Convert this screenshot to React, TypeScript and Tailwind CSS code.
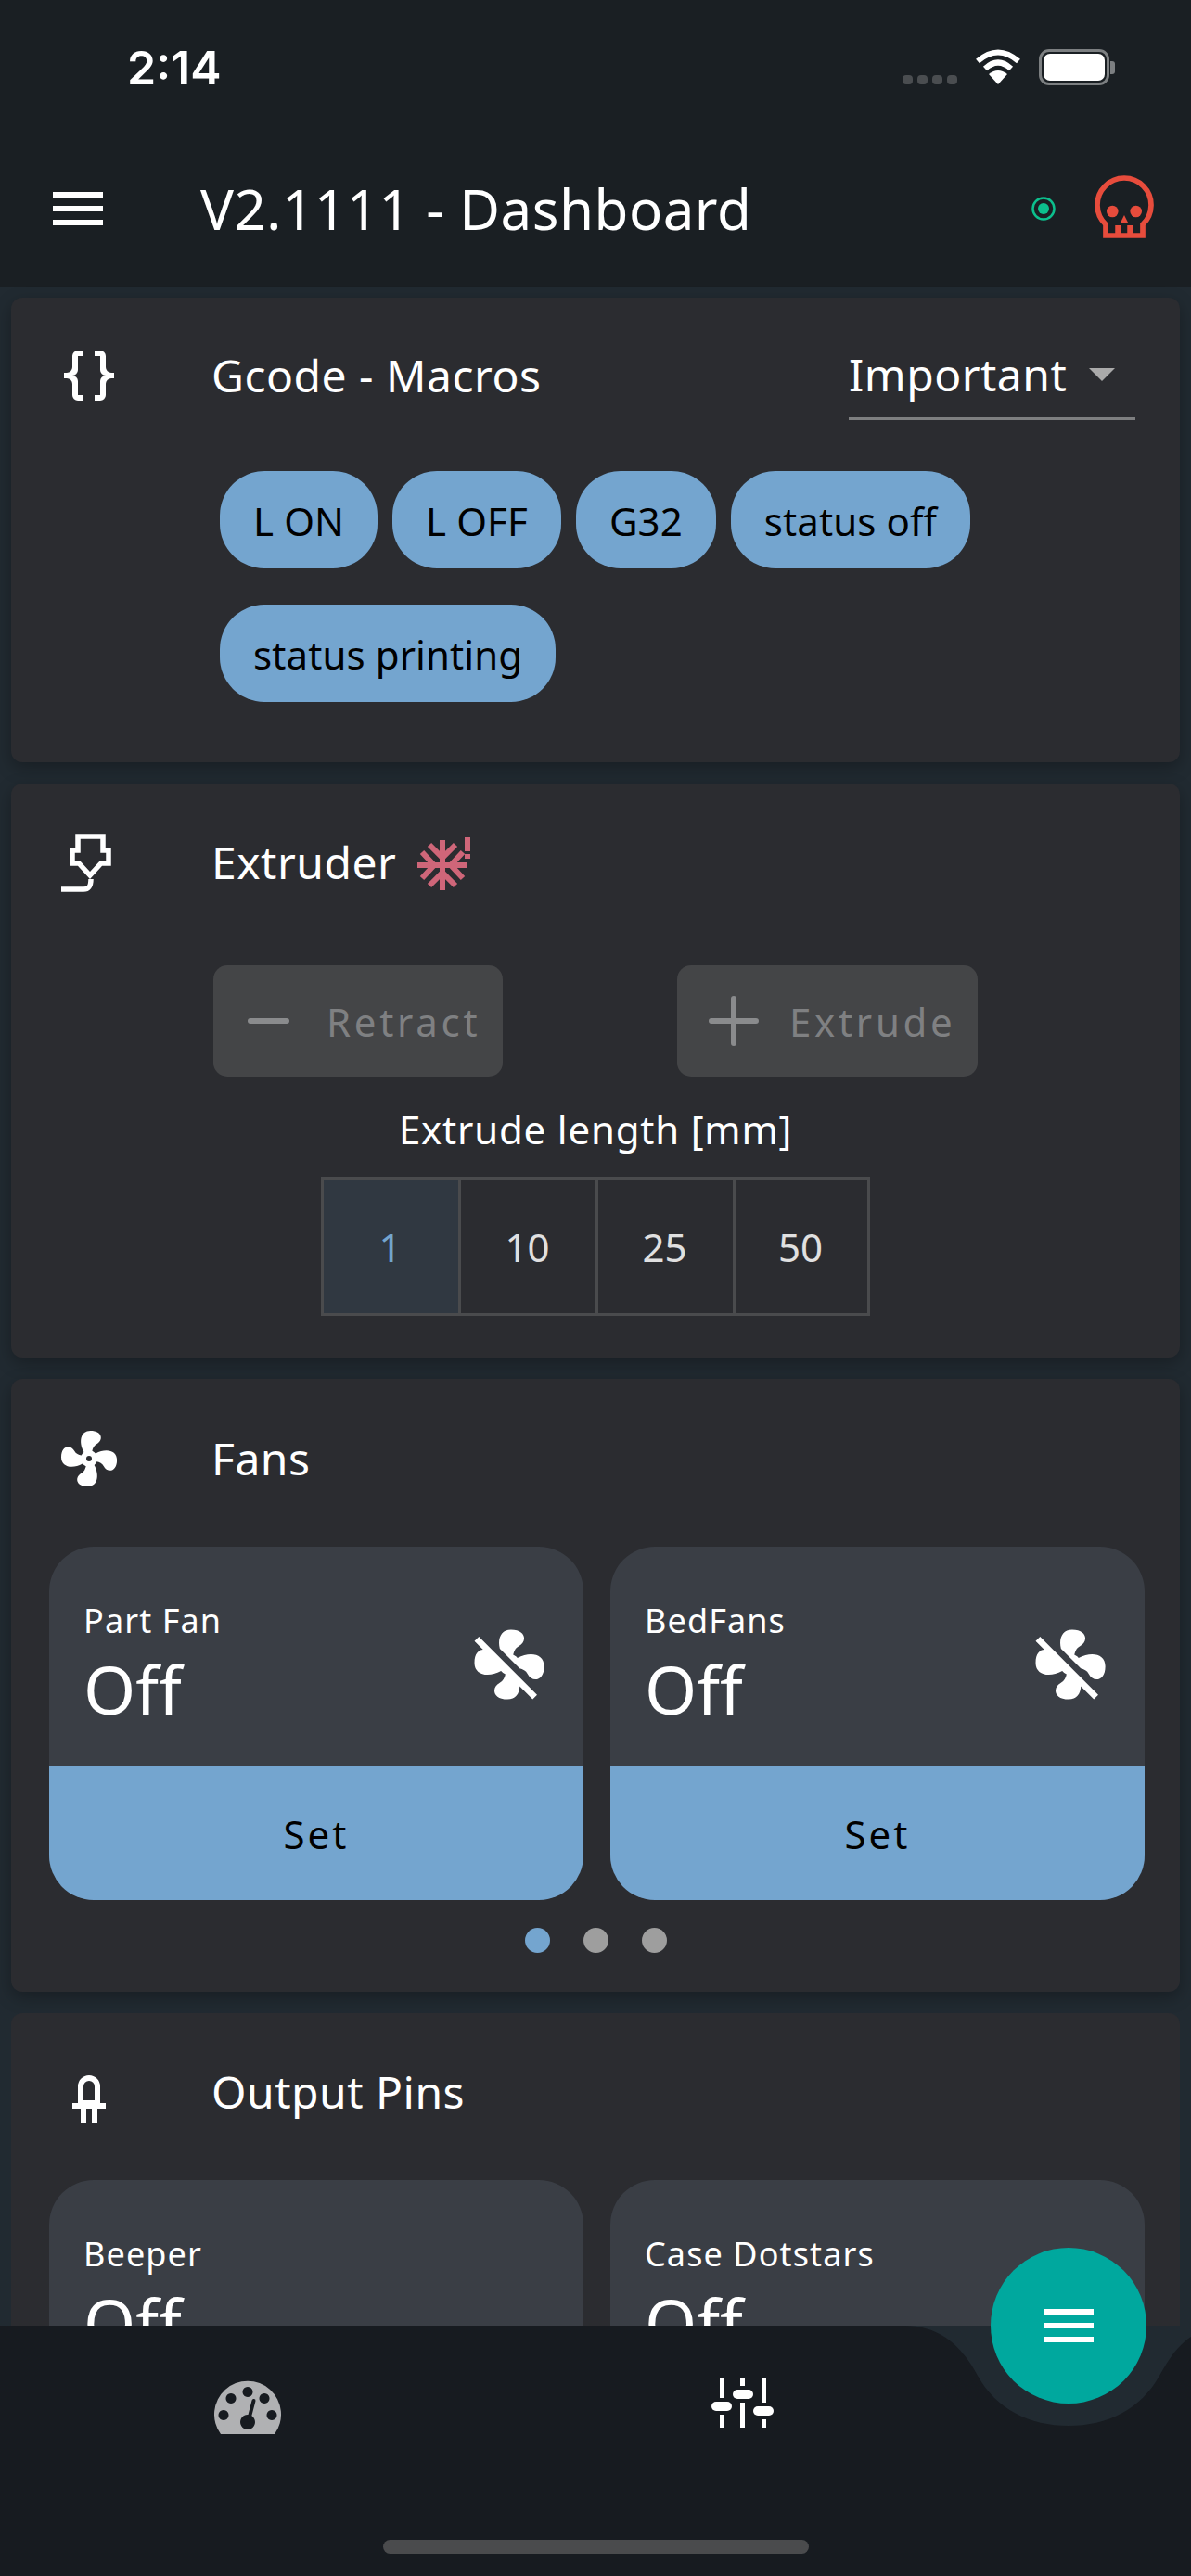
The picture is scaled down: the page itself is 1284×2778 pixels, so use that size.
import React from "react";

const MENU = "M3,6H21V8H3V6M3,11H21V13H3V11M3,16H21V18H3V16Z";
const BRACES =
  "M8,3A2,2 0 0,0 6,5V9A2,2 0 0,1 4,11H3V13H4A2,2 0 0,1 6,15V19A2,2 0 0,0 8,21H10V19H8V14A2,2 0 0,0 6,12A2,2 0 0,0 8,10V5H10V3M16,3A2,2 0 0,1 18,5V9A2,2 0 0,0 20,11H21V13H20A2,2 0 0,0 18,15V19A2,2 0 0,1 16,21H14V19H16V14A2,2 0 0,1 18,12A2,2 0 0,1 16,10V5H14V3H16Z";
const FAN =
  "M12,11A1,1 0 0,0 11,12A1,1 0 0,0 12,13A1,1 0 0,0 13,12A1,1 0 0,0 12,11M12.5,2C17,2 17.11,5.57 14.75,6.75C13.76,7.24 13.32,8.29 13.13,9.22C13.61,9.42 14.03,9.73 14.35,10.13C18.05,8.13 22.03,8.92 22.03,12.5C22.03,17 18.46,17.1 17.28,14.73C16.78,13.74 15.72,13.3 14.79,13.11C14.59,13.59 14.28,14 13.88,14.34C15.87,18.03 15.08,22 11.5,22C7,22 6.91,18.42 9.27,17.24C10.25,16.75 10.69,15.71 10.89,14.79C10.4,14.59 9.97,14.27 9.65,13.87C5.96,15.85 2,15.07 2,11.5C2,7 5.56,6.89 6.74,9.26C7.24,10.25 8.29,10.68 9.22,10.87C9.41,10.39 9.73,9.97 10.14,9.65C8.15,5.96 8.94,2 12.5,2Z";
const FAN_OFF =
  "M12.5 2C9.64 2 8.57 4.55 9.29 7.47L15 13.16C15.87 13.37 16.81 13.81 17.28 14.73C18.46 17.1 22.03 17 22.03 12.5C22.03 8.92 18.05 8.13 14.35 10.13C14.03 9.73 13.61 9.42 13.13 9.22C13.32 8.29 13.76 7.24 14.75 6.75C17.11 5.57 17 2 12.5 2M3.28 4L2 5.27L4.47 7.73C3.22 7.74 2 8.87 2 11.5C2 15.07 5.96 15.85 9.65 13.87C9.97 14.27 10.4 14.59 10.89 14.79C10.69 15.71 10.25 16.75 9.27 17.24C6.91 18.42 7 22 11.5 22C13.8 22 14.94 20.36 15 18.26L18.73 22L20 20.72L3.28 4Z";
const LED =
  "M12,6A4,4 0 0,0 8,10V16H6V18H9V23H11V18H13V23H15V18H18V16H16V10A4,4 0 0,0 12,6M12,8A2,2 0 0,1 14,10V15H10V10A2,2 0 0,1 12,8Z";

const Mdi = ({ d, className }: { d: string; className?: string }) => (
  <svg viewBox="0 0 24 24" fill="currentColor" className={className}>
    <path d={d} />
  </svg>
);

const ExtruderIcon = () => (
  <svg viewBox="0 -2 72 72" className="w-[72px] h-[72px] overflow-visible" fill="none" stroke="white" strokeWidth="5.5">
    <path d="M24 6 H51 V21 H57 V35 H49 L37 48 L25 35 H18 V21 H24 Z" />
    <path d="M38 52 C38 60 36 63 30 63 H6" />
  </svg>
);

const SnowAlert = () => (
  <svg viewBox="0 0 60 64" className="w-[60px] h-[64px] ml-[23px] -mt-[2px]" fill="none" stroke="#cf6679" strokeWidth="6">
    <path d="M0 36 H54 M27 9 V63" />
    <path d="M13 14 L27 28 L41 14 M13 58 L27 44 L41 58" />
    <path d="M5 22 L18 36 L5 50 M49 22 L36 36 L49 50" />
    <path d="M54 6 V21 M54 24 V29" />
  </svg>
);

const SkullIcon = () => (
  <svg viewBox="0 -1 66 70" className="w-[66px] h-[70px]" fill="none">
    <path d="M13 64 V52 A29 29 0 1 1 53 52 V64 Z" stroke="#e74c3c" strokeWidth="5.7" />
    <circle cx="20.3" cy="38" r="6.3" fill="#e74c3c" />
    <circle cx="45.7" cy="38" r="6.3" fill="#e74c3c" />
    <path d="M33 42 L37 50 H29 Z" fill="#e74c3c" />
    <path d="M26.5 53 V64 M39.5 53 V64" stroke="#e74c3c" strokeWidth="6.5" />
  </svg>
);

const GaugeIcon = () => (
  <svg viewBox="0 0 72 58" className="w-[72px] h-[58px]">
    <path
      fillRule="evenodd"
      fill="#b0b1b3"
      d="M7 58 A36 36 0 1 1 65 58 Z M36 7 a5.5 5.5 0 1 0 .01 0 Z M18 14 a5.5 5.5 0 1 0 .01 0 Z M54 14 a5.5 5.5 0 1 0 .01 0 Z M10 32 a5.5 5.5 0 1 0 .01 0 Z M62 32 a5.5 5.5 0 1 0 .01 0 Z M36 37 a8 8 0 1 0 .01 0 Z"
    />
    <path d="M37 43 L42.5 22" stroke="#171b20" strokeWidth="4" strokeLinecap="round" />
  </svg>
);

const TuneIcon = () => (
  <svg viewBox="0 0 68 54" className="w-[68px] h-[54px]" fill="white">
    <rect x="9" y="0" width="5" height="22" />
    <rect x="9" y="40" width="5" height="14" />
    <rect x="31" y="0" width="5" height="9" />
    <rect x="31" y="27" width="5" height="27" />
    <rect x="54" y="0" width="5" height="27" />
    <rect x="54" y="45" width="5" height="9" />
    <rect x="0" y="26" width="22" height="10" rx="5" />
    <rect x="23" y="13" width="22" height="10" rx="5" />
    <rect x="45" y="31" width="22" height="10" rx="5" />
  </svg>
);

const CardHeader = ({ icon, title, extra }: { icon: React.ReactNode; title: string; extra?: React.ReactNode }) => (
  <div className="flex items-center h-[72px] pl-[48px]">
    <div className="w-[72px] h-[72px] shrink-0 text-white">{icon}</div>
    <span className="ml-[96px] text-[48px] leading-[72px] tracking-[0.5px] text-white">{title}</span>
    {extra}
  </div>
);

const macros = ["L ON", "L OFF", "G32", "status off", "status printing"];

const MacroChip = ({ label }: { label: string }) => (
  <button className="h-[105px] px-[36px] pt-[2px] rounded-[48px] bg-[#74a5cf] text-black text-[42px] tracking-[0.1px]">
    {label}
  </button>
);

const StatTile = ({ name, withIcon, withSet }: { name: string; withIcon?: boolean; withSet?: boolean }) => (
  <div className="w-[576px] shrink-0 rounded-[48px] overflow-hidden bg-[#3a3e45]">
    <div className="flex justify-between h-[237px]">
      <div className="pl-[37px] pt-[56px]">
        <div className="text-[36px] leading-[48px] tracking-[1.1px] text-white">{name}</div>
        <div className="mt-[13px] text-[72px] leading-[72px] text-white">Off</div>
      </div>
      {withIcon && <Mdi d={FAN_OFF} className="w-[90px] h-[90px] mt-[82px] mr-[35px] text-white" />}
    </div>
    {withSet && (
      <div className="h-[144px] flex items-center justify-center bg-[#74a5cf] text-black text-[42px] tracking-[3px]">
        Set
      </div>
    )}
  </div>
);

const App = () => {
  return (
    <div className="relative h-[2778px] overflow-hidden bg-[#212a31] font-['Noto_Sans',sans-serif]">
      {/* Status bar + app bar */}
      <div className="h-[309px] bg-[#1a1f23] flex flex-col">
        <div className="h-[144px] flex items-start justify-between pl-[137px] pr-[82px] pt-[43px]">
          <span className="font-['Inter',sans-serif] font-semibold text-[50px] leading-[60px] text-white">2:14</span>
          <div className="flex items-start mt-[10px]">
            <div className="flex gap-[5px] mt-[28px]">
              <span className="w-[11px] h-[10px] rounded-[4px] bg-[#4a4d50]" />
              <span className="w-[11px] h-[10px] rounded-[4px] bg-[#4a4d50]" />
              <span className="w-[11px] h-[10px] rounded-[4px] bg-[#4a4d50]" />
              <span className="w-[11px] h-[10px] rounded-[4px] bg-[#4a4d50]" />
            </div>
            <svg viewBox="0 0 50 38" className="w-[50px] h-[38px] ml-[19px]" fill="none" stroke="white" strokeWidth="6">
              <path d="M3 13 Q25 -6 47 13" />
              <path d="M11 21 Q25 8 39 21" />
              <path d="M25 38 L15 27 Q25 19 35 27 Z" fill="white" stroke="none" />
            </svg>
            <div className="ml-[19px] flex items-center">
              <div className="w-[76px] h-[39px] rounded-[11px] border-[3px] border-[#7c7f81] p-[2px]">
                <div className="w-full h-full rounded-[7px] bg-white" />
              </div>
              <div className="w-[5px] h-[14px] ml-[1px] rounded-r-[3px] bg-[#7c7f81]" />
            </div>
          </div>
        </div>
        <div className="flex items-center h-[72px] mt-[45px] pl-[48px] pr-[39px]">
          <Mdi d={MENU} className="w-[72px] h-[72px] text-white" />
          <span className="ml-[96px] text-[60px] leading-[72px] tracking-[0.5px] text-white">V2.1111 - Dashboard</span>
          <svg viewBox="0 0 26 26" className="ml-auto w-[26px] h-[26px]" fill="none">
            <circle cx="13" cy="13" r="11.5" stroke="#0cbf8d" strokeWidth="2.5" />
            <circle cx="13" cy="13" r="6" fill="#0cbf8d" />
          </svg>
          <div className="ml-[41px] -mt-[3px]">
            <SkullIcon />
          </div>
        </div>
      </div>

      {/* Panels */}
      <main className="flex flex-col gap-[23px] px-[12px] pt-[12px]">
        <section className="rounded-[12px] bg-[#2b2c30] shadow-[0_6px_18px_rgba(0,0,0,0.28)] pt-[48px] pb-[65px]">
          <CardHeader
            icon={<Mdi d={BRACES} className="w-[72px] h-[72px]" />}
            title="Gcode - Macros"
            extra={
              <div className="ml-auto mr-[48px] w-[309px] h-[96px] shrink-0 flex items-center justify-between pr-[22px] border-b-[3px] border-[#7e7f80]">
                <span className="text-[48px] tracking-[0.5px] text-white">Important</span>
                <span className="w-0 h-0 border-x-[14px] border-x-transparent border-t-[14px] border-t-[#aaaaaa]" />
              </div>
            }
          />
          <div className="flex flex-wrap gap-x-[16px] gap-y-[39px] mt-[67px] pl-[225px] pr-[100px]">
            {macros.map((m) => (
              <MacroChip key={m} label={m} />
            ))}
          </div>
        </section>

        <section className="rounded-[12px] bg-[#2b2c30] shadow-[0_6px_18px_rgba(0,0,0,0.28)] pt-[49px] pb-[45px]">
          <CardHeader icon={<ExtruderIcon />} title="Extruder" extra={<SnowAlert />} />
          <div className="flex mt-[75px] pl-[218px] gap-[188px]">
            <button className="w-[312px] h-[120px] rounded-[15px] bg-[#444547] flex items-center pl-[37px] text-[#7f8082]">
              <span className="w-[45px] h-[6px] rounded-full bg-[#8a8b8d]" />
              <span className="ml-[40px] text-[42px] tracking-[3.7px]">Retract</span>
            </button>
            <button className="w-[324px] h-[120px] rounded-[15px] bg-[#444547] flex items-center pl-[34px] text-[#7f8082]">
              <svg viewBox="0 0 54 54" className="w-[54px] h-[54px]" stroke="#8a8b8d" strokeWidth="6" strokeLinecap="round">
                <path d="M3 27 H51 M27 3 V51" />
              </svg>
              <span className="ml-[33px] text-[42px] tracking-[3.7px]">Extrude</span>
            </button>
          </div>
          <div className="mt-[33px] text-center text-[42px] leading-[48px] tracking-[0.8px] text-white">
            Extrude length [mm]
          </div>
          <div className="flex justify-center mt-[27px]">
            <div className="flex h-[150px] border-[3px] border-[#4a4b4d] text-[42px] text-[#e0e0e0]">
              <div className="w-[145px] pr-[2px] flex items-center justify-center bg-[#303841] text-[#74a5cf]">1</div>
              <div className="w-[148px] pr-[2px] flex items-center justify-center border-l-[3px] border-[#4a4b4d]">10</div>
              <div className="w-[148px] pr-[2px] flex items-center justify-center border-l-[3px] border-[#4a4b4d]">25</div>
              <div className="w-[145px] pr-[2px] flex items-center justify-center border-l-[3px] border-[#4a4b4d]">50</div>
            </div>
          </div>
        </section>

        <section className="rounded-[12px] bg-[#2b2c30] shadow-[0_6px_18px_rgba(0,0,0,0.28)] pt-[50px] pb-[42px]">
          <CardHeader icon={<Mdi d={FAN} className="w-[72px] h-[72px]" />} title="Fans" />
          <div className="flex gap-[29px] mt-[59px] px-[41px]">
            <StatTile name="Part Fan" withIcon withSet />
            <StatTile name="BedFans" withIcon withSet />
          </div>
          <div className="flex justify-center gap-[36px] mt-[30px]">
            <span className="w-[27px] h-[27px] rounded-full bg-[#74a5cf]" />
            <span className="w-[27px] h-[27px] rounded-full bg-[#9e9e9e]" />
            <span className="w-[27px] h-[27px] rounded-full bg-[#9e9e9e]" />
          </div>
        </section>

        <section className="rounded-[12px] bg-[#2b2c30] pt-[49px] pb-[42px]">
          <CardHeader icon={<Mdi d={LED} className="w-[72px] h-[72px]" />} title="Output Pins" />
          <div className="flex gap-[29px] mt-[59px] px-[41px]">
            <StatTile name="Beeper" />
            <StatTile name="Case Dotstars" />
          </div>
        </section>
      </main>

      <nav className="absolute left-0 right-0 bottom-0 h-[270px] bg-[#212a31]">
        <svg viewBox="0 0 1284 270" className="absolute inset-0 w-full h-full" fill="#171b20">
          <path d="M0 0 H975 C1015 0 1038 24 1054 54 C1074 90 1110 108 1152 108 C1194 108 1230 90 1250 54 C1262 32 1272 20 1284 12 V270 H0 Z" />
        </svg>
        <div className="relative flex">
          <div className="w-[533px] h-[174px] flex justify-center pt-[59px]">
            <GaugeIcon />
          </div>
          <div className="w-[535px] h-[174px] flex justify-center pt-[56px]">
            <TuneIcon />
          </div>
        </div>
        <div className="relative mx-auto mt-[57px] w-[459px] h-[15px] rounded-full bg-[#4a4b4d]" />
      </nav>

      {/* Floating action button */}
      <button className="absolute left-[1068px] top-[2424px] w-[168px] h-[168px] rounded-full bg-[#00a89e] flex items-center justify-center">
        <Mdi d={MENU} className="w-[72px] h-[72px] text-white" />
      </button>
    </div>
  );
};

export default App;
